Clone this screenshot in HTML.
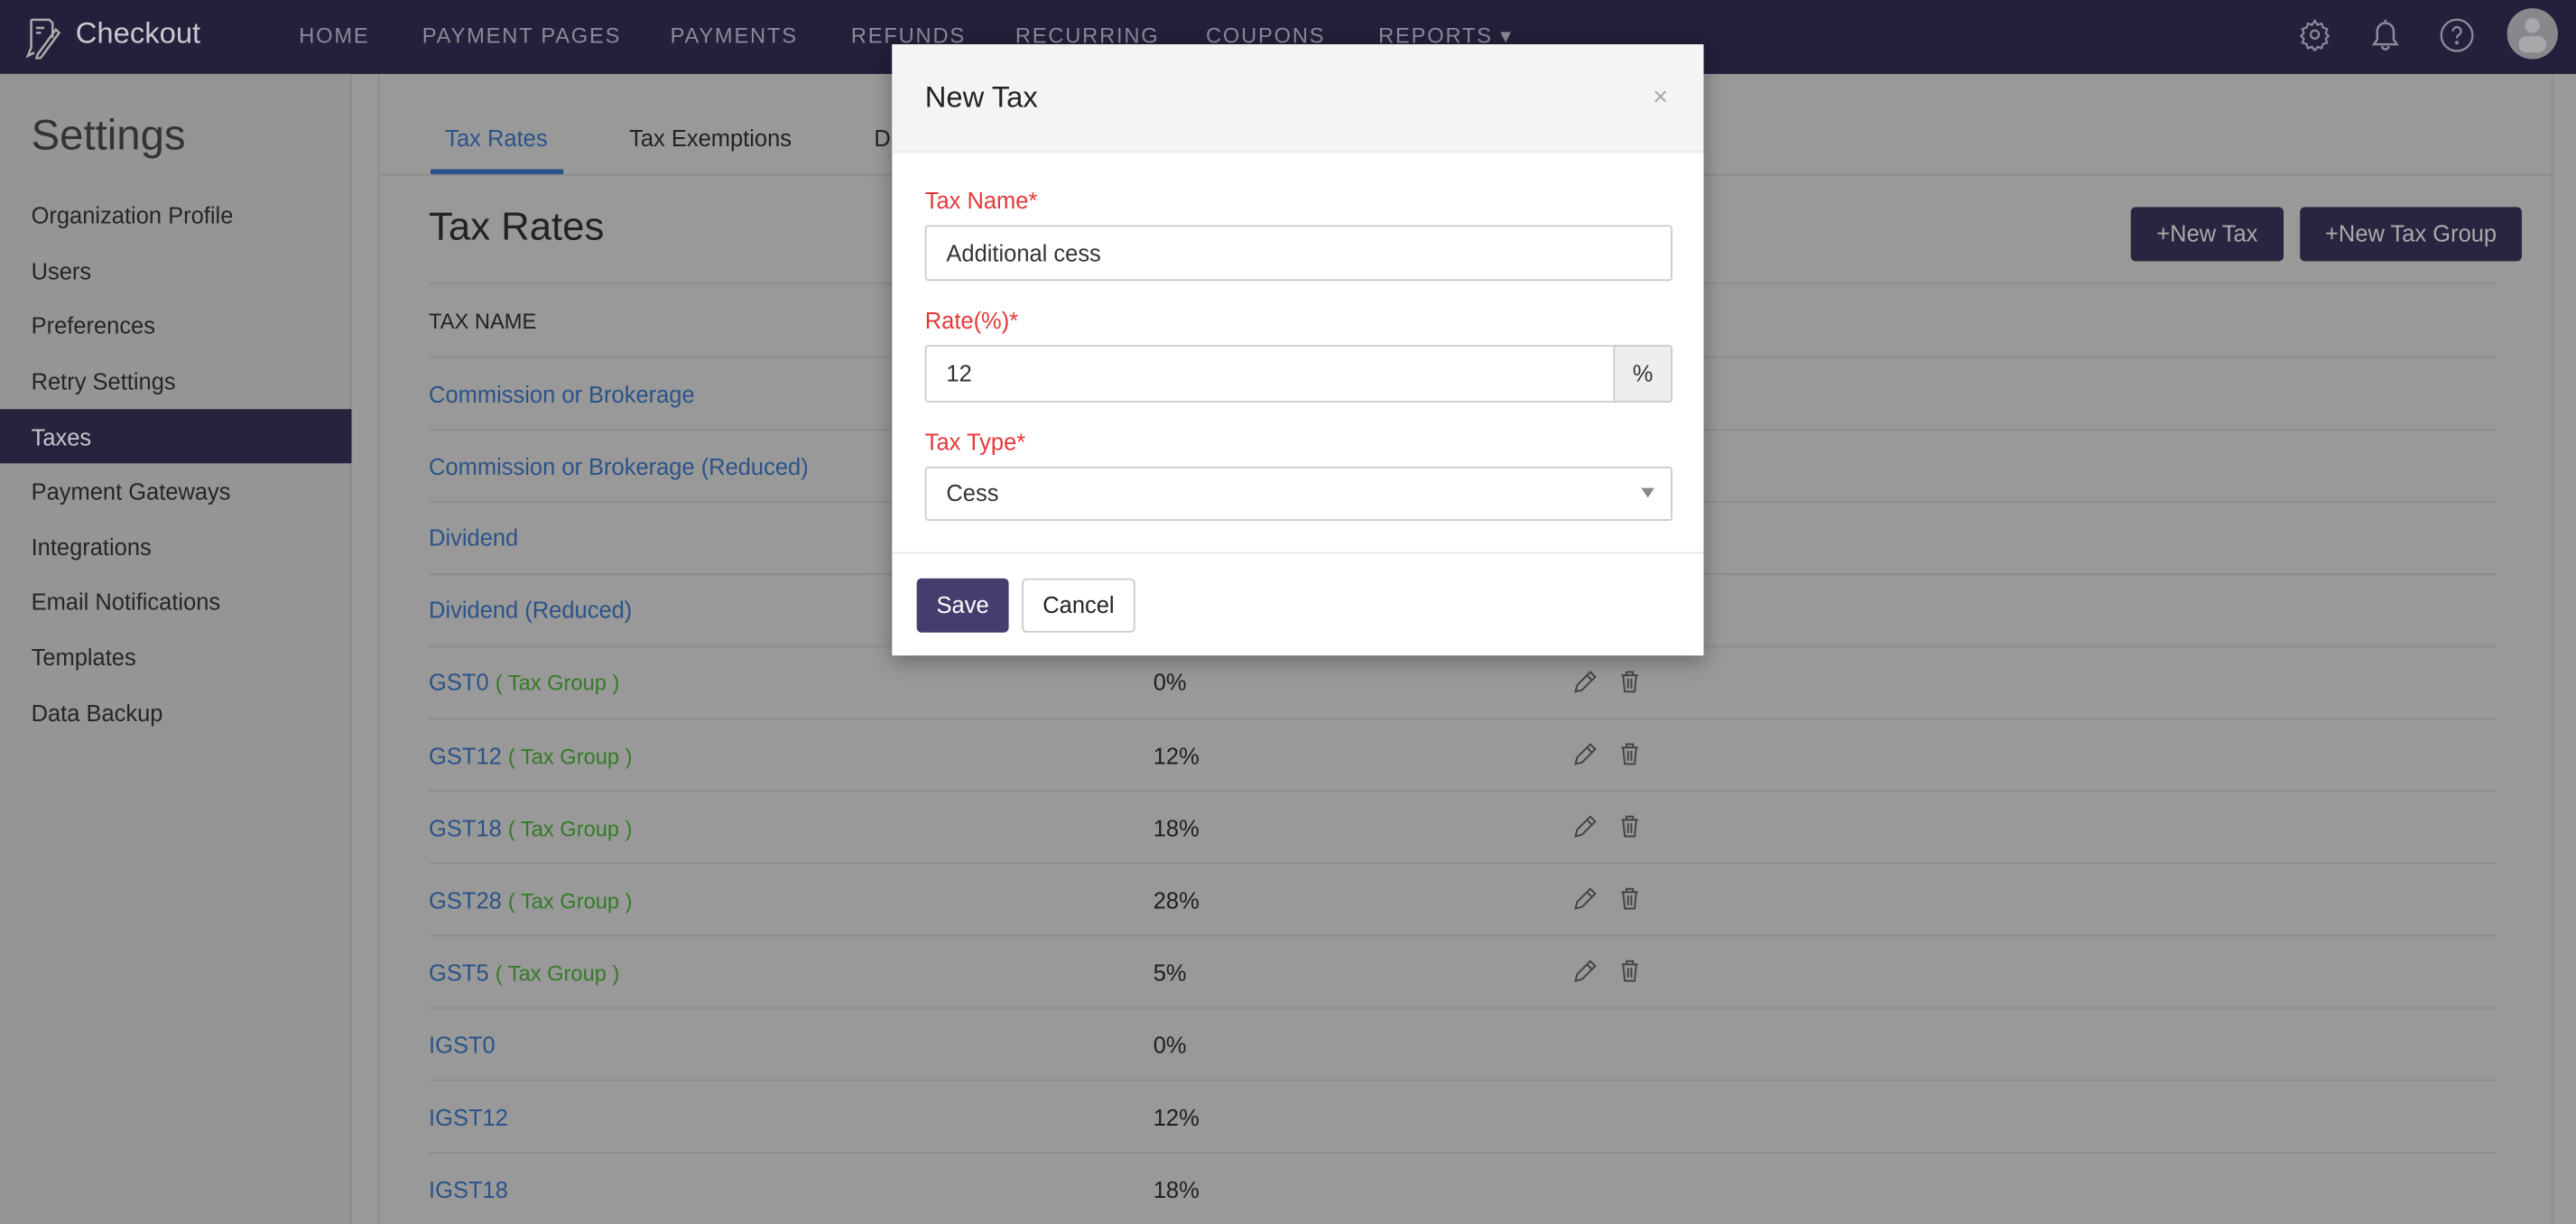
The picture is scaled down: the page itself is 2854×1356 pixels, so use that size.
<!DOCTYPE html>
<html><head><meta charset="utf-8"><style>
*{box-sizing:border-box;margin:0;padding:0}
html,body{width:2854px;height:1356px;overflow:hidden;background:#999}
#w{width:1568px;height:745px;transform:scale(1.82015);transform-origin:0 0;position:relative;font-family:"Liberation Sans",sans-serif;background:#999;overflow:hidden}
.a{position:absolute;white-space:nowrap}
.nav{left:0;top:0;width:1568px;height:45px;background:#22203a}
.ni{top:14px;font-size:13px;letter-spacing:1px;color:#8a8a98}
.side{left:0;top:45px;width:214px;height:700px;background:#959595;border-right:1px solid #8a8a8a}
.mi{left:19px;font-size:14px;color:#262626}
.lnk{left:261px;font-size:14px;color:#2b5389}
.g{color:#357a28;font-size:13px}
.rt{left:702px;font-size:14px;color:#1f1f1f}
.hl{left:261px;width:1259px;height:1px;background:#8c8c8c}
.btn{background:#29243f;color:#aaa;font-size:14px;border-radius:3px;text-align:center;line-height:33px;height:33px}
.lab{left:20px;font-size:14px;color:#e5383b}
.inp{left:20px;width:455px;border:1px solid #ccc;border-radius:2px;font-size:14px;color:#333;padding-left:12px;background:#fff}
</style></head><body><div id="w">
<div class="a nav"></div>
<svg class="a" style="left:15px;top:10px" width="24" height="26" viewBox="0 0 24 26" fill="none" stroke="#aaa" stroke-width="1.4"><path d="M4 2h11l2 2v9M4 2v17l-2 5 4-2"/><path d="M7 7h5M7 10h3"/><path d="M8 23l11-15 2 2-11 15-3 1z"/></svg>
<div class="a" style="left:46px;top:10px;font-size:18px;color:#c9c9cf">Checkout</div>
<div class="a ni" style="left:182px">HOME</div>
<div class="a ni" style="left:257px">PAYMENT PAGES</div>
<div class="a ni" style="left:408px">PAYMENTS</div>
<div class="a ni" style="left:518px">REFUNDS</div>
<div class="a ni" style="left:618px">RECURRING</div>
<div class="a ni" style="left:734px">COUPONS</div>
<div class="a ni" style="left:839px">REPORTS ▾</div>
<svg class="a" style="left:1399px;top:11px" width="20" height="20" viewBox="0 0 24 24" fill="none" stroke="#8a8a98" stroke-width="1.5"><circle cx="12" cy="12" r="3"/><path d="M12 2l2 3 3-1 1 3 3 1-1 3 2 2-2 2 1 3-3 1-1 3-3-1-2 3-2-3-3 1-1-3-3-1 1-3-2-2 2-2-1-3 3-1 1-3 3 1z"/></svg>
<svg class="a" style="left:1442px;top:11px" width="20" height="21" viewBox="0 0 20 21" fill="none" stroke="#8a8a98" stroke-width="1.4"><path d="M3 16h14l-2-3V8a5 5 0 0 0-10 0v5zM8 17a2 2 0 0 0 4 0M10 1v2"/></svg>
<svg class="a" style="left:1485px;top:11px" width="21" height="21" viewBox="0 0 21 21" fill="none" stroke="#8a8a98" stroke-width="1.3"><circle cx="10.5" cy="10.5" r="9.5"/><path d="M8 8a2.5 2.5 0 1 1 3.5 2.3c-.8.4-1 1-1 2"/><circle cx="10.5" cy="15" r=".5"/></svg>
<div class="a" style="left:1526px;top:5px;width:31px;height:31px;border-radius:50%;background:#88888c;overflow:hidden"><div class="a" style="left:11px;top:6px;width:9px;height:9px;border-radius:50%;background:#a8a8ab"></div><div class="a" style="left:7px;top:17px;width:17px;height:10px;border-radius:8px;background:#a8a8ab"></div></div>

<div class="a side"></div>
<div class="a" style="left:230px;top:45px;width:1px;height:700px;background:#8c8c8c"></div>
<div class="a" style="left:1553px;top:45px;width:1px;height:700px;background:#8c8c8c"></div>
<div class="a" style="left:19px;top:67px;font-size:26px;color:#333">Settings</div>
<div class="a mi" style="top:123px">Organization Profile</div>
<div class="a mi" style="top:157px">Users</div>
<div class="a mi" style="top:190px">Preferences</div>
<div class="a mi" style="top:224px">Retry Settings</div>
<div class="a" style="left:0;top:249px;width:214px;height:33px;background:#27233f"></div>
<div class="a mi" style="top:258px;color:#c4c4c8">Taxes</div>
<div class="a mi" style="top:291px">Payment Gateways</div>
<div class="a mi" style="top:325px">Integrations</div>
<div class="a mi" style="top:358px">Email Notifications</div>
<div class="a mi" style="top:392px">Templates</div>
<div class="a mi" style="top:426px">Data Backup</div>

<div class="a" style="left:271px;top:76px;font-size:14px;color:#2b5389">Tax Rates</div>
<div class="a" style="left:383px;top:76px;font-size:14px;color:#222">Tax Exemptions</div>
<div class="a" style="left:532px;top:76px;font-size:14px;color:#222">D</div>
<div class="a" style="left:231px;top:106px;width:1322px;height:1px;background:#8c8c8c"></div>
<div class="a" style="left:262px;top:103px;width:81px;height:3px;background:#2b5389"></div>
<div class="a" style="left:261px;top:125px;font-size:24px;color:#222">Tax Rates</div>
<div class="a btn" style="left:1297px;top:126px;width:93px">+New Tax</div>
<div class="a btn" style="left:1400px;top:126px;width:135px">+New Tax Group</div>
<div class="a hl" style="top:172px"></div>
<div class="a" style="left:261px;top:188px;font-size:13px;color:#222">TAX NAME</div>
<div class="a hl" style="top:217px"></div>

<div class="a lnk" style="top:232px">Commission or Brokerage</div><div class="a hl" style="top:261px"></div>
<div class="a lnk" style="top:276px">Commission or Brokerage (Reduced)</div><div class="a hl" style="top:305px"></div>
<div class="a lnk" style="top:319px">Dividend</div><div class="a hl" style="top:349px"></div>
<div class="a lnk" style="top:363px">Dividend (Reduced)</div><div class="a hl" style="top:393px"></div>
<div class="a lnk" style="top:407px">GST0 <span class="g">( Tax Group )</span></div><div class="a rt" style="top:407px">0%</div><div class="a hl" style="top:437px"></div>
<div class="a lnk" style="top:452px">GST12 <span class="g">( Tax Group )</span></div><div class="a rt" style="top:452px">12%</div><div class="a hl" style="top:481px"></div>
<div class="a lnk" style="top:496px">GST18 <span class="g">( Tax Group )</span></div><div class="a rt" style="top:496px">18%</div><div class="a hl" style="top:525px"></div>
<div class="a lnk" style="top:540px">GST28 <span class="g">( Tax Group )</span></div><div class="a rt" style="top:540px">28%</div><div class="a hl" style="top:569px"></div>
<div class="a lnk" style="top:584px">GST5 <span class="g">( Tax Group )</span></div><div class="a rt" style="top:584px">5%</div><div class="a hl" style="top:613px"></div>
<div class="a lnk" style="top:628px">IGST0</div><div class="a rt" style="top:628px">0%</div><div class="a hl" style="top:657px"></div>
<div class="a lnk" style="top:672px">IGST12</div><div class="a rt" style="top:672px">12%</div><div class="a hl" style="top:701px"></div>
<div class="a lnk" style="top:716px">IGST18</div><div class="a rt" style="top:716px">18%</div>

<svg class="a" style="left:950px;top:400px" width="60" height="210" fill="none" stroke="#444" stroke-width="1.1">
<g id="ic"><path d="M9 21l1-4 8-8 3 3-8 8zM16 11l3 3"/><path d="M37 11h10M40 11v-2h4v2M38 11l1 10h6l1-10M41 13v6M43 13v6"/></g>
<use href="#ic" y="44"/><use href="#ic" y="88"/><use href="#ic" y="132"/><use href="#ic" y="176"/>
</svg>

<div class="a" style="left:543px;top:27px;width:494px;height:372px;background:#fff;box-shadow:0 3px 12px rgba(0,0,0,.35)">
<div class="a" style="left:0;top:0;width:494px;height:66px;background:#f4f4f4;border-bottom:1px solid #e8e8e8"></div>
<div class="a" style="left:20px;top:22px;font-size:18px;color:#222">New Tax</div>
<div class="a" style="left:463px;top:24px;font-size:16px;color:#aaa">×</div>
<div class="a lab" style="top:87px">Tax Name*</div>
<div class="a inp" style="top:110px;height:34px;line-height:32px">Additional cess</div>
<div class="a lab" style="top:160px">Rate(%)*</div>
<div class="a inp" style="top:183px;height:35px;line-height:33px">12</div>
<div class="a" style="left:439px;top:183px;width:36px;height:35px;background:#eee;border:1px solid #ccc;border-radius:0 2px 2px 0;text-align:center;line-height:33px;font-size:14px;color:#333">%</div>
<div class="a lab" style="top:234px">Tax Type*</div>
<div class="a inp" style="top:257px;height:33px;line-height:31px">Cess</div>
<div class="a" style="left:456px;top:270px;border:4px solid transparent;border-top:6px solid #888;width:0;height:0"></div>
<div class="a" style="left:0;top:309px;width:494px;height:1px;background:#e8e8e8"></div>
<div class="a" style="left:15px;top:325px;width:56px;height:33px;background:#443d6e;border-radius:3px;color:#fff;font-size:14px;text-align:center;line-height:33px">Save</div>
<div class="a" style="left:79px;top:325px;width:69px;height:33px;border:1px solid #ccc;border-radius:3px;color:#222;font-size:14px;text-align:center;line-height:31px">Cancel</div>
</div>
</div></body></html>
